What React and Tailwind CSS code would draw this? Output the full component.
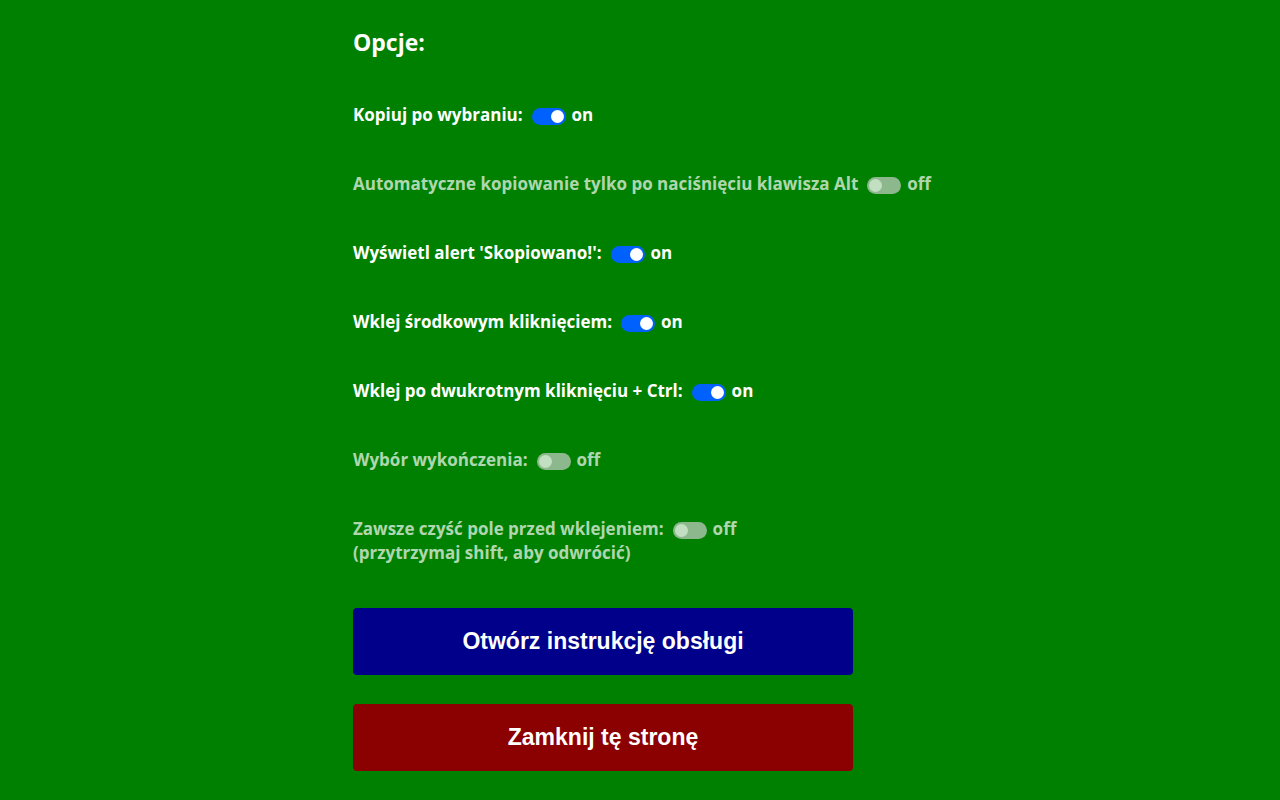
const options = [
  { label: 'Kopiuj po wybraniu:', on: true },
  { label: 'Automatyczne kopiowanie tylko po naciśnięciu klawisza Alt', on: false },
  { label: "Wyświetl alert 'Skopiowano!':", on: true },
  { label: 'Wklej środkowym kliknięciem:', on: true },
  { label: 'Wklej po dwukrotnym kliknięciu + Ctrl:', on: true },
  { label: 'Wybór wykończenia:', on: false },
  { label: 'Zawsze czyść pole przed wklejeniem:', on: false, note: '(przytrzymaj shift, aby odwrócić)' },
]

function Toggle({ on }) {
  return on ? (
    <span className="inline-flex items-center justify-end w-[34px] h-[17px] rounded-full bg-[#0061ff] px-[2px] translate-y-[1px]">
      <span className="w-[13px] h-[13px] rounded-full bg-white" />
    </span>
  ) : (
    <span className="inline-flex items-center justify-start w-[34px] h-[17px] rounded-full bg-[#8db88d] px-[2px] translate-y-[1px]">
      <span className="w-[13px] h-[13px] rounded-full bg-[#c2dfc2]" />
    </span>
  )
}

export default function App() {
  return (
    <div className="min-h-[800px] bg-[#008000] font-['Open_Sans',sans-serif]">
      <div className="ml-[353px] w-[500px] pt-[26px]">
        <h1 className="text-[23px] leading-[32px] font-bold text-white">Opcje:</h1>
        <div className="mt-[45px] flex flex-col gap-[45px]">
          {options.map((o) => (
            <div
              key={o.label}
              className={`text-[17px] leading-[24px] font-bold whitespace-nowrap ${o.on ? 'text-white' : 'text-white/70'}`}
            >
              <div className="flex items-center">
                <span>{o.label}</span>
                <span className="ml-[9px] mr-[6px] flex">
                  <Toggle on={o.on} />
                </span>
                <span>{o.on ? 'on' : 'off'}</span>
              </div>
              {o.note && <div>{o.note}</div>}
            </div>
          ))}
        </div>
        <div className="mt-[43px] flex flex-col gap-[29px] font-['Liberation_Sans',Arial,sans-serif]">
          <button className="h-[67px] w-[500px] rounded-[4px] bg-[#00008b] text-white text-[23px] font-bold">
            Otwórz instrukcję obsługi
          </button>
          <button className="h-[67px] w-[500px] rounded-[4px] bg-[#8b0000] text-white text-[23px] font-bold">
            Zamknij tę stronę
          </button>
        </div>
      </div>
    </div>
  )
}
